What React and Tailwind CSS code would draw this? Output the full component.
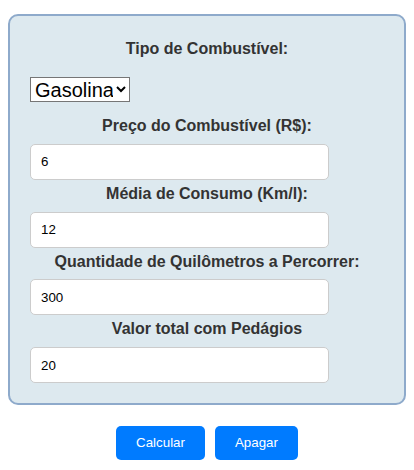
import { useState } from 'react'

// Calculadora de custo de viagem
const fields = [
  { id: 'preco', label: 'Preço do Combustível (R$):', value: '6' },
  { id: 'media', label: 'Média de Consumo (Km/l):', value: '12' },
  { id: 'km', label: 'Quantidade de Quilômetros a Percorrer:', value: '300' },
  { id: 'pedagio', label: 'Valor total com Pedágios', value: '20' },
]

export default function App() {
  const [values, setValues] = useState(
    Object.fromEntries(fields.map((f) => [f.id, f.value]))
  )
  const [tipo, setTipo] = useState('gasolina')

  return (
    <div className="min-h-[470px] bg-white pt-[14px] font-['Liberation_Sans',Arial,sans-serif]">
      {/* Form box */}
      <div className="mx-2 flex flex-col rounded-[10px] border-2 border-[#8eaacb] bg-[#dde9ef] px-5 pt-6 pb-5">
        <label className="mb-[19px] block text-center text-[16px] leading-[18px] font-bold text-[#333]">
          Tipo de Combustível:
        </label>
        <select
          value={tipo}
          onChange={(e) => setTipo(e.target.value)}
          className="mb-[10px] block h-[25px] w-[100px] border border-[#767676] bg-white text-[20px] leading-[23px] text-black"
        >
          <option value="gasolina">Gasolina</option>
          <option value="etanol">Etanol</option>
          <option value="diesel">Diesel</option>
        </select>

        {fields.map((f) => (
          <div key={f.id}>
            <label
              htmlFor={f.id}
              className="mt-[5px] mb-[8.8px] block text-center text-[16px] leading-[18px] font-bold text-[#333]"
            >
              {f.label}
            </label>
            <input
              id={f.id}
              type="text"
              value={values[f.id]}
              onChange={(e) => setValues({ ...values, [f.id]: e.target.value })}
              className="block h-[36px] w-[299px] rounded-[5px] border border-[#ccc] bg-white px-[10px] text-[13.33px] text-black outline-none"
            />
          </div>
        ))}
      </div>

      {/* Actions */}
      <div className="mt-[21px] flex justify-center gap-[10px]">
        <button className="h-[34px] rounded-[5px] bg-[#007bff] px-5 text-[13.33px] text-white">
          Calcular
        </button>
        <button className="h-[34px] rounded-[5px] bg-[#007bff] px-5 text-[13.33px] text-white">
          Apagar
        </button>
      </div>
    </div>
  )
}
